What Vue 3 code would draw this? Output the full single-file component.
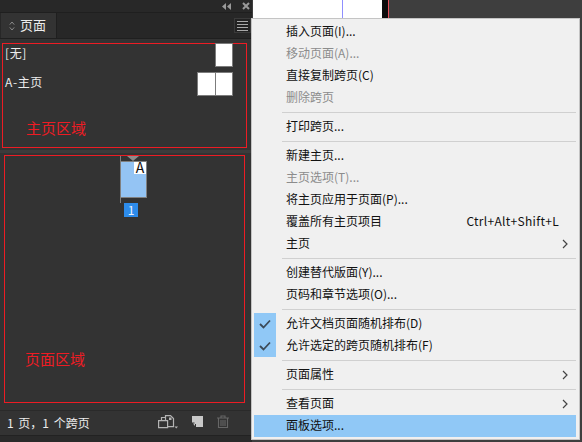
<script setup>
const menu = [
  { label: '插入页面(I)...' },
  { label: '移动页面(A)...', off: true },
  { label: '直接复制跨页(C)' },
  { label: '删除跨页', off: true },
  { sep: true },
  { label: '打印跨页...' },
  { sep: true },
  { label: '新建主页...' },
  { label: '主页选项(T)...', off: true },
  { label: '将主页应用于页面(P)...' },
  { label: '覆盖所有主页项目', key: 'Ctrl+Alt+Shift+L' },
  { label: '主页', sub: true },
  { sep: true },
  { label: '创建替代版面(Y)...' },
  { label: '页码和章节选项(O)...' },
  { sep: true },
  { label: '允许文档页面随机排布(D)', check: true },
  { label: '允许选定的跨页随机排布(F)', check: true },
  { sep: true },
  { label: '页面属性', sub: true },
  { sep: true },
  { label: '查看页面', sub: true },
  { label: '面板选项...', hot: true }
]
</script>

<template>
  <div class="app">
    <div class="panel">
      <div class="topbar">
        <svg class="collapse" width="9" height="7" viewBox="0 0 9 7"><path fill="#9a9a9a" d="M4 0v7L0 3.5zM9 0v7L5 3.5z"/></svg>
        <svg class="close" width="8" height="8" viewBox="0 0 8 8"><path stroke="#9a9a9a" stroke-width="2" d="M1 1l6 6M7 1L1 7"/></svg>
      </div>
      <div class="tabs">
        <div class="tab">
          <svg width="6" height="10" viewBox="0 0 6 10"><path fill="none" stroke="#8a8a8a" d="M.8 3.6 3 1l2.2 2.6M.8 6.4 3 9l2.2-2.6"/></svg>
          <span>页面</span>
        </div>
        <div class="burger"><i></i><i></i><i></i><i></i></div>
      </div>

      <div class="masters">
        <div class="master">
          <span>[无]</span>
          <div class="thumb"></div>
        </div>
        <div class="master second">
          <span>A-主页</span>
          <div class="thumb left"></div>
          <div class="thumb"></div>
        </div>
        <div class="note master-note">主页区域</div>
      </div>

      <div class="divider"></div>

      <div class="pages">
        <div class="spread">
          <div class="pointer"></div>
          <div class="page"><b>A</b></div>
          <div class="num">1</div>
        </div>
        <div class="note page-note">页面区域</div>
      </div>

      <div class="footer">
        <span>1 页，1 个跨页</span>
        <div class="tools">
          <svg width="20" height="14" viewBox="0 0 20 14"><path fill="none" stroke="#b4b4b4" stroke-width="1.2" d="M3.500 5.500V2.500h4M.6 5.600h9v7h-9zM7.500 5.500V.6h5l3 3v8h-6"/><path fill="#b4b4b4" d="M11 2.500h2.500V5H11zM16.500 11.500h3.500l-1.750 2z"/></svg>
          <svg width="11" height="11" viewBox="0 0 11 11"><path fill="#c8c8c8" d="M0 0h11v11H4V8H2.500V6.500H0z"/><path fill="#c8c8c8" d="M1 7.500h2V10z"/></svg>
          <svg width="12" height="13" viewBox="0 0 12 13"><path fill="none" stroke="#666" stroke-width="1.100" d="M0 3h12M4 3V1h4v2M1.500 3v9.500h9V3M4 5v6M6 5v6M8 5v6"/></svg>
        </div>
      </div>
      <div class="grip"></div>
    </div>

    <div class="behind">
      <div class="doc one"></div>
      <div class="doc two"></div>
      <div class="rule"></div>
    </div>

    <ul class="menu">
      <template v-for="(item, i) in menu" :key="i">
        <li v-if="item.sep" class="sep"></li>
        <li v-else class="item" :class="{ off: item.off, hot: item.hot }">
          <span class="gutter" :class="{ checked: item.check }">
            <svg v-if="item.check" width="12" height="10" viewBox="0 0 12 10"><path fill="none" stroke="#3c4a57" stroke-width="1.800" d="M1 5l3.500 3.500L11 1.500"/></svg>
          </span>
          <span class="label">{{ item.label }}</span>
          <span v-if="item.key" class="key">{{ item.key }}</span>
          <svg v-if="item.sub" class="arrow" width="6" height="10" viewBox="0 0 6 10"><path fill="none" stroke="#444" stroke-width="1.200" d="M1 1l4 4-4 4"/></svg>
        </li>
      </template>
    </ul>
  </div>
</template>

<style scoped>
.app {
  position: relative;
  display: flex;
  width: 582px;
  height: 442px;
  overflow: hidden;
  background: #3e3e3e;
  font-family: "Noto Sans CJK SC", "Noto Sans", sans-serif;
}

.panel {
  display: flex;
  flex-direction: column;
  flex: none;
  width: 252px;
  height: 442px;
  background: #333;
  color: #ececec;
  font-size: 13px;
}

.topbar {
  display: flex;
  align-items: center;
  flex: none;
  height: 12px;
  padding-right: 2px;
  background: #282828;
  justify-content: flex-end;
}

.collapse {
  margin-right: 11px;
}

.tabs {
  display: flex;
  flex: none;
  justify-content: space-between;
  height: 27px;
  background: #272727;
  border-top: 1px solid #1f1f1f;
  border-bottom: 1px solid #1f1f1f;
  box-sizing: border-box;
}

.tab {
  display: flex;
  align-items: center;
  gap: 5px;
  width: 56px;
  margin-left: 1px;
  padding-left: 8px;
  box-sizing: border-box;
  background: #333;
  line-height: 1;
  border-right: 1px solid #1f1f1f;
}

.tab span {
  padding-bottom: 2px;
}

.burger {
  display: flex;
  flex-direction: column;
  align-items: center;
  justify-content: center;
  gap: 2px;
  width: 17px;
  height: 15px;
  margin: 5px 1px 0 0;
  background: #222;
  border: 1px solid #3a3a3a;
  box-sizing: border-box;
}

.burger i {
  width: 11px;
  height: 1px;
  background: #a8a8a8;
}

.masters {
  display: flex;
  flex-direction: column;
  flex: none;
  height: 105px;
  margin: 4px 5px 0 2px;
  border: 1px solid #ed1c24;
  box-sizing: border-box;
}

.master {
  display: flex;
  align-items: center;
  flex: none;
  height: 24px;
  margin-top: -1px;
  padding: 0 13px 0 2px;
  font-size: 12px;
  letter-spacing: 0.6px;
  line-height: 1;
}

.master span {
  margin-right: auto;
  padding-bottom: 4px;
}

.second {
  margin-top: 5px;
}

.thumb {
  width: 18px;
  height: 24px;
  background: #fff;
  border: 1px solid #7c7c7c;
  box-sizing: border-box;
}

.left {
  border-right: 0;
}

.note {
  color: #ed1c24;
  font-size: 15px;
  letter-spacing: 0;
  line-height: 1;
}

.master-note {
  margin-top: 24px;
  padding-left: 23px;
}

.divider {
  flex: none;
  height: 3px;
  margin-top: 2px;
  background: #3c3c3c;
}

.pages {
  display: flex;
  flex-direction: column;
  flex: none;
  justify-content: space-between;
  height: 248px;
  margin: 2px 7px 0 4px;
  padding-bottom: 36px;
  border: 1px solid #ed1c24;
  box-sizing: border-box;
}

.spread {
  position: relative;
  width: 27px;
  margin-left: 115px;
  padding-top: 5px;
}

.spread::before {
  content: "";
  position: absolute;
  left: 0;
  top: 0;
  width: 1px;
  height: 47px;
  background: #808080;
}

.pointer {
  position: absolute;
  left: 7px;
  top: 0;
  border-style: solid;
  border-width: 5px 6px 0;
  border-color: #8c8c8c transparent transparent;
}

.page {
  display: flex;
  justify-content: flex-end;
  height: 37px;
  background: #94c4f4;
  border: 1px solid #808080;
  box-sizing: border-box;
}

.page b {
  width: 12px;
  height: 12px;
  background: #fff;
  color: #111;
  font-size: 14px;
  font-weight: 400;
  line-height: 11px;
  text-align: center;
}

.num {
  width: 14px;
  height: 14px;
  margin: 5px 0 0 4px;
  background: #2d8ceb;
  color: #eaf4ff;
  font-size: 12px;
  line-height: 14px;
  text-align: center;
}

.page-note {
  padding-left: 20px;
}

.footer {
  display: flex;
  align-items: center;
  justify-content: space-between;
  flex: none;
  height: 25px;
  margin-top: 7px;
  padding: 0 23px 0 7px;
  border-top: 1px solid #2a2a2a;
  box-sizing: border-box;
  font-size: 12px;
  word-spacing: 2px;
}

.footer > span {
  padding-bottom: 2px;
}

.tools {
  display: flex;
  align-items: center;
  gap: 14px;
  padding-bottom: 3px;
}

.grip {
  flex: 1;
  background: #2a2a2a;
  border-top: 1px solid #222;
}

.behind {
  display: flex;
  flex: 1;
  align-items: flex-start;
  height: 18px;
  margin-left: 1px;
}

.doc {
  height: 100%;
  background: #fff;
}

.one {
  width: 89px;
  border-right: 1px solid #8f8fff;
}

.two {
  width: 39px;
  border-right: 6px solid #0c0c0c;
}

.rule {
  width: 1px;
  height: 100%;
  background: #e8505a;
}

.menu {
  position: absolute;
  left: 251px;
  top: 18px;
  width: 329px;
  margin: 0;
  padding: 2px 3px 2px 2px;
  list-style: none;
  background: #f0f0f0;
  border: 1px solid #c4c4c4;
  box-sizing: border-box;
  color: #111;
  font-size: 12px;
}

.item {
  display: flex;
  align-items: center;
  height: 22px;
  line-height: 20px;
}

.off {
  color: #8c8c8c;
}

.hot {
  background: #90c8f6;
}

.gutter {
  display: flex;
  align-items: center;
  justify-content: center;
  flex: none;
  width: 22px;
  height: 22px;
  margin-right: 10px;
}

.checked {
  background: #90c8f6;
}

.label {
  flex: 1;
  padding-bottom: 2px;
}

.key {
  margin-right: 17px;
  padding-bottom: 2px;
  letter-spacing: 0.3px;
}

.arrow {
  margin-right: 8px;
}

.sep {
  position: relative;
  height: 7px;
}

.sep::after {
  content: "";
  position: absolute;
  left: 28px;
  right: 0;
  top: 3px;
  height: 1px;
  background: #d0d0d0;
}
</style>
